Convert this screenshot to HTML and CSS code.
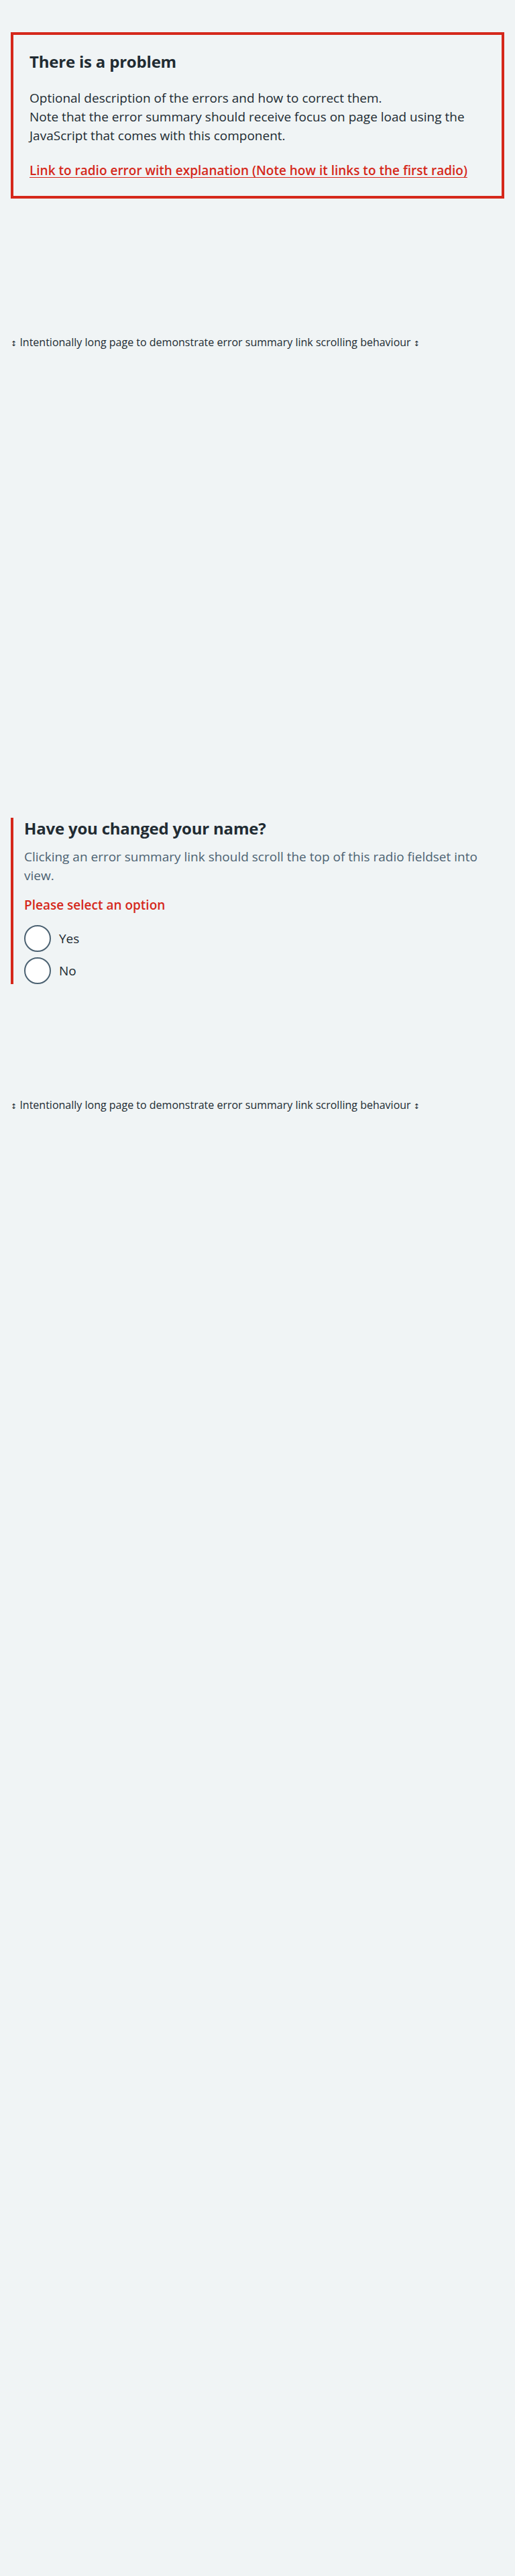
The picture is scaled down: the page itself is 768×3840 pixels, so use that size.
FILE: index.html
```html
<!DOCTYPE html>
<html lang="en">
<head>
<meta charset="utf-8">
<title>Error summary</title>
<link rel="stylesheet" href="styles.css">
</head>
<body>
<main class="page">
  <div class="error-summary" role="alert" tabindex="-1">
    <h2 class="error-summary__title">There is a problem</h2>
    <div class="error-summary__body">
      <p class="error-summary__text">Optional description of the errors and how to correct them.<br>Note that the error summary should receive focus on page load using the JavaScript that comes with this component.</p>
      <ul class="error-summary__list">
        <li><a class="error-summary__link" href="#example-1">Link to radio error with explanation (Note how it links to the first radio)</a></li>
      </ul>
    </div>
  </div>

  <p class="spacer-note spacer-note--first"><span class="arrow">↕</span> Intentionally long page to demonstrate error summary link scrolling behaviour <span class="arrow">↕</span></p>

  <div class="form-group form-group--error">
    <fieldset class="fieldset">
      <legend class="fieldset__legend">Have you changed your name?</legend>
      <div class="hint">Clicking an error summary link should scroll the top of this radio fieldset into view.</div>
      <span class="error-message">Please select an option</span>
      <div class="radios">
        <div class="radios__item">
          <input class="radios__input" id="example-1" name="example" type="radio" value="yes">
          <label class="radios__label" for="example-1">Yes</label>
        </div>
        <div class="radios__item">
          <input class="radios__input" id="example-2" name="example" type="radio" value="no">
          <label class="radios__label" for="example-2">No</label>
        </div>
      </div>
    </fieldset>
  </div>

  <p class="spacer-note spacer-note--second"><span class="arrow">↕</span> Intentionally long page to demonstrate error summary link scrolling behaviour <span class="arrow">↕</span></p>
</main>
</body>
</html>
```

FILE: styles.css
```css
html {
  background: #f0f4f5;
}

body {
  margin: 0;
  min-height: 3840px;
  background: #f0f4f5;
  color: #212b32;
  font-family: "Open Sans", "Liberation Sans", Arial, sans-serif;
  -webkit-font-smoothing: antialiased;
}

.page {
  padding: 48px 16px 0;
}

.error-summary {
  border: 4px solid #d5281b;
  padding: 24px;
}

.error-summary__title {
  margin: 0 0 24px;
  font-size: 24px;
  line-height: 32px;
  font-weight: 700;
  letter-spacing: -0.2px;
}

.error-summary__text {
  margin: 0 0 24px;
  font-size: 19px;
  line-height: 28px;
}

.error-summary__list {
  list-style: none;
  margin: 0;
  padding: 0;
}

.error-summary__link {
  color: #d5281b;
  font-weight: 600;
  font-size: 19px;
  line-height: 28px;
  text-decoration: underline;
  text-underline-offset: 3px;
  text-decoration-thickness: 1px;
}

.spacer-note {
  margin: 0;
  font-size: 16px;
  line-height: 24px;
}

.spacer-note--first {
  margin-top: 202px;
}

.spacer-note--second {
  margin-top: 168px;
}

.arrow {
  font-size: 11px;
  font-family: "DejaVu Sans", sans-serif;
}

.form-group {
  margin-top: 694px;
}

.form-group--error {
  border-left: 4px solid #d5281b;
  padding-left: 16px;
}

.fieldset {
  border: 0;
  margin: 0;
  padding: 0;
  min-width: 0;
}

.fieldset__legend {
  padding: 0;
  margin: 0 0 12px;
  font-size: 24px;
  line-height: 32px;
  font-weight: 700;
  letter-spacing: -0.2px;
}

.hint {
  color: #4c6272;
  font-size: 19px;
  line-height: 28px;
  margin-bottom: 16px;
}

.error-message {
  display: block;
  color: #d5281b;
  font-weight: 600;
  font-size: 19px;
  line-height: 28px;
  margin-bottom: 16px;
}

.radios__item {
  display: flex;
  align-items: center;
  gap: 12px;
  margin-bottom: 8px;
}

.radios__item:last-child {
  margin-bottom: 0;
}

.radios__input {
  appearance: none;
  -webkit-appearance: none;
  width: 40px;
  height: 40px;
  margin: 0;
  border: 2px solid #4c6272;
  border-radius: 50%;
  background: #ffffff;
  box-sizing: border-box;
  flex: none;
}

.radios__label {
  font-size: 19px;
  line-height: 28px;
}
```
